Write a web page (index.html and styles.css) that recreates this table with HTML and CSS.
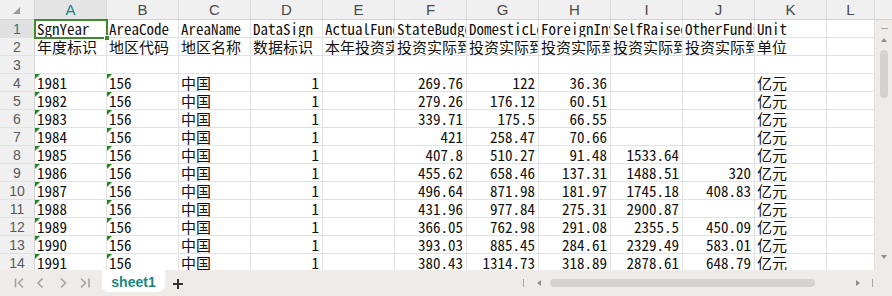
FILE: index.html
```html
<!DOCTYPE html>
<html lang="zh">
<head>
<meta charset="utf-8">
<title>sheet1</title>
<link rel="stylesheet" href="styles.css">
</head>
<body>
<div class="app">
  <div class="sheet">
    <div class="ch corner"><span class="corner-tri"></span></div>
    <div class="ch cur">A</div><div class="ch">B</div><div class="ch">C</div><div class="ch">D</div><div class="ch">E</div><div class="ch">F</div><div class="ch">G</div><div class="ch">H</div><div class="ch">I</div><div class="ch">J</div><div class="ch">K</div><div class="ch">L</div><div class="ch fill"></div>

    <div class="vs">
      <span class="vs-dash"></span>
      <span class="tri-up"></span>
      <span class="vs-thumb"></span>
      <span class="tri-down"></span>
    </div>

    <div class="rh cur">1</div><div class="c">SgnYear</div><div class="c">AreaCode</div><div class="c">AreaName</div><div class="c">DataSign</div><div class="c">ActualFunds</div><div class="c">StateBudget</div><div class="c">DomesticLoan</div><div class="c">ForeignInvest</div><div class="c">SelfRaisedFunds</div><div class="c">OtherFunds</div><div class="c">Unit</div><div class="c"></div>
    <div class="rh">2</div><div class="c">年度标识</div><div class="c">地区代码</div><div class="c">地区名称</div><div class="c">数据标识</div><div class="c">本年投资实际到位资金</div><div class="c">投资实际到位资金</div><div class="c">投资实际到位资金</div><div class="c">投资实际到位资金</div><div class="c">投资实际到位资金</div><div class="c">投资实际到位资金</div><div class="c">单位</div><div class="c"></div>
    <div class="rh">3</div><div class="c"></div><div class="c"></div><div class="c"></div><div class="c"></div><div class="c"></div><div class="c"></div><div class="c"></div><div class="c"></div><div class="c"></div><div class="c"></div><div class="c"></div><div class="c"></div>
    <div class="rh">4</div><div class="c t">1981</div><div class="c t">156</div><div class="c">中国</div><div class="c n">1</div><div class="c"></div><div class="c n">269.76</div><div class="c n">122</div><div class="c n">36.36</div><div class="c n"></div><div class="c n"></div><div class="c">亿元</div><div class="c"></div>
    <div class="rh">5</div><div class="c t">1982</div><div class="c t">156</div><div class="c">中国</div><div class="c n">1</div><div class="c"></div><div class="c n">279.26</div><div class="c n">176.12</div><div class="c n">60.51</div><div class="c n"></div><div class="c n"></div><div class="c">亿元</div><div class="c"></div>
    <div class="rh">6</div><div class="c t">1983</div><div class="c t">156</div><div class="c">中国</div><div class="c n">1</div><div class="c"></div><div class="c n">339.71</div><div class="c n">175.5</div><div class="c n">66.55</div><div class="c n"></div><div class="c n"></div><div class="c">亿元</div><div class="c"></div>
    <div class="rh">7</div><div class="c t">1984</div><div class="c t">156</div><div class="c">中国</div><div class="c n">1</div><div class="c"></div><div class="c n">421</div><div class="c n">258.47</div><div class="c n">70.66</div><div class="c n"></div><div class="c n"></div><div class="c">亿元</div><div class="c"></div>
    <div class="rh">8</div><div class="c t">1985</div><div class="c t">156</div><div class="c">中国</div><div class="c n">1</div><div class="c"></div><div class="c n">407.8</div><div class="c n">510.27</div><div class="c n">91.48</div><div class="c n">1533.64</div><div class="c n"></div><div class="c">亿元</div><div class="c"></div>
    <div class="rh">9</div><div class="c t">1986</div><div class="c t">156</div><div class="c">中国</div><div class="c n">1</div><div class="c"></div><div class="c n">455.62</div><div class="c n">658.46</div><div class="c n">137.31</div><div class="c n">1488.51</div><div class="c n">320</div><div class="c">亿元</div><div class="c"></div>
    <div class="rh">10</div><div class="c t">1987</div><div class="c t">156</div><div class="c">中国</div><div class="c n">1</div><div class="c"></div><div class="c n">496.64</div><div class="c n">871.98</div><div class="c n">181.97</div><div class="c n">1745.18</div><div class="c n">408.83</div><div class="c">亿元</div><div class="c"></div>
    <div class="rh">11</div><div class="c t">1988</div><div class="c t">156</div><div class="c">中国</div><div class="c n">1</div><div class="c"></div><div class="c n">431.96</div><div class="c n">977.84</div><div class="c n">275.31</div><div class="c n">2900.87</div><div class="c n"></div><div class="c">亿元</div><div class="c"></div>
    <div class="rh">12</div><div class="c t">1989</div><div class="c t">156</div><div class="c">中国</div><div class="c n">1</div><div class="c"></div><div class="c n">366.05</div><div class="c n">762.98</div><div class="c n">291.08</div><div class="c n">2355.5</div><div class="c n">450.09</div><div class="c">亿元</div><div class="c"></div>
    <div class="rh">13</div><div class="c t">1990</div><div class="c t">156</div><div class="c">中国</div><div class="c n">1</div><div class="c"></div><div class="c n">393.03</div><div class="c n">885.45</div><div class="c n">284.61</div><div class="c n">2329.49</div><div class="c n">583.01</div><div class="c">亿元</div><div class="c"></div>
    <div class="rh">14</div><div class="c t">1991</div><div class="c t">156</div><div class="c">中国</div><div class="c n">1</div><div class="c"></div><div class="c n">380.43</div><div class="c n">1314.73</div><div class="c n">318.89</div><div class="c n">2878.61</div><div class="c n">648.79</div><div class="c">亿元</div><div class="c"></div>

    <div class="selection"><span class="handle"></span></div>
  </div>

  <div class="bar">
    <svg class="nav" width="102" height="26" viewBox="0 0 102 26" aria-hidden="true">
      <g fill="none" stroke="#a3a3a3" stroke-width="1.6">
        <path d="M15.5 8.5v9"/>
        <path d="M23 8.5l-4.5 4.5 4.5 4.5"/>
        <path d="M42.5 8.5l-4.5 4.5 4.5 4.5"/>
        <path d="M61 8.5l4.5 4.5-4.5 4.5"/>
        <path d="M81 8.5l4.5 4.5-4.5 4.5"/>
        <path d="M89 8.5v9"/>
      </g>
    </svg>
    <div class="tab">sheet1</div>
    <svg class="plus" width="12" height="12" viewBox="0 0 12 12" aria-hidden="true">
      <path d="M6 1v10M1 6h10" stroke="#333" stroke-width="2"/>
    </svg>
    <div class="hs">
      <span class="hs-sep"></span>
      <span class="tri-left"></span>
      <span class="hs-thumb"></span>
      <span class="tri-right"></span>
      <span class="hs-sep last"></span>
    </div>
  </div>
</div>
</body>
</html>
```

FILE: styles.css
```css
* {
  box-sizing: border-box;
}

body {
  margin: 0;
  background: #ffffff;
}

.app {
  width: 892px;
  height: 296px;
  overflow: hidden;
  display: flex;
  flex-direction: column;
}

.sheet {
  position: relative;
  display: grid;
  grid-template-columns: 35px repeat(11, 72px) 48px 17px;
  grid-template-rows: 20px repeat(14, 18px);
  height: 270px;
  overflow: hidden;
  font-family: "Noto Sans Mono CJK SC", "Liberation Mono", "Noto Sans CJK SC", monospace;
  font-size: 15px;
  color: #111;
}

.ch {
  background: #f0f0f0;
  border-right: 1px solid #dcdcdc;
  border-bottom: 1px solid #d4d4d4;
  display: flex;
  align-items: center;
  justify-content: center;
  font-family: "Liberation Sans", "Noto Sans", sans-serif;
  font-size: 15px;
  color: #4a4a4a;
}

.ch.cur {
  background: #e4e4e4;
  color: #17847d;
}

.ch.fill {
  border-right: none;
}

.corner {
  position: relative;
}

.corner-tri {
  position: absolute;
  right: 14px;
  bottom: 5px;
  width: 0;
  height: 0;
  border-left: 7px solid transparent;
  border-bottom: 7px solid #9a9a9a;
}

.rh {
  background: #f0f0f0;
  border-right: 1px solid #d4d4d4;
  border-bottom: 1px solid #e2e2e2;
  display: flex;
  align-items: center;
  justify-content: center;
  font-family: "Liberation Sans", "Noto Sans", sans-serif;
  font-size: 14px;
  color: #5a5a5a;
}

.rh.cur {
  background: #e0e0e0;
  color: #17847d;
}

.c {
  position: relative;
  border-right: 1px solid #e2e2e2;
  border-bottom: 1px solid #e2e2e2;
  padding: 0 3px 0 2px;
  display: flex;
  align-items: flex-end;
  line-height: 16px;
  white-space: nowrap;
  overflow: hidden;
}

.n {
  justify-content: flex-end;
}

.t::before {
  content: "";
  position: absolute;
  left: 0;
  top: 0;
  width: 0;
  height: 0;
  border-top: 5px solid #1d8a1d;
  border-right: 5px solid transparent;
}

.vs {
  grid-column: 14;
  grid-row: 2 / 16;
  background: #efebe9;
  display: flex;
  flex-direction: column;
  align-items: center;
  padding-left: 1px;
}

.vs-dash {
  width: 7px;
  height: 1px;
  background: #a8a8a8;
  margin-top: 8px;
}

.tri-up {
  width: 0;
  height: 0;
  margin-top: 9px;
  border-left: 3px solid transparent;
  border-right: 3px solid transparent;
  border-bottom: 4px solid #8e8e8e;
}

.vs-thumb {
  width: 8px;
  height: 48px;
  margin-top: 8px;
  border-radius: 4px;
  background: #d6d2d0;
}

.tri-down {
  width: 0;
  height: 0;
  margin-top: auto;
  margin-bottom: 13px;
  border-left: 3px solid transparent;
  border-right: 3px solid transparent;
  border-top: 4px solid #8e8e8e;
}

.selection {
  position: absolute;
  left: 34px;
  top: 19px;
  width: 74px;
  height: 20px;
  border: 2px solid #3f8a2f;
  pointer-events: none;
}

.handle {
  position: absolute;
  right: -4px;
  bottom: -4px;
  width: 6px;
  height: 6px;
  background: #3f8a2f;
  border: 1px solid #ffffff;
}

.bar {
  height: 26px;
  background: #efebe9;
  display: flex;
  align-items: flex-start;
  font-family: "Liberation Sans", "Noto Sans", sans-serif;
}

.nav {
  display: block;
  flex: none;
}

.tab {
  width: 63px;
  height: 22px;
  background: #ffffff;
  border-radius: 0 0 7px 7px;
  display: flex;
  align-items: center;
  justify-content: center;
  padding-top: 1px;
  font-size: 14px;
  font-weight: bold;
  color: #1b8680;
}

.plus {
  margin: 8px 0 0 7px;
  flex: none;
}

.hs {
  margin-left: auto;
  margin-right: 19px;
  height: 26px;
  display: flex;
  align-items: center;
}

.hs-sep {
  width: 1px;
  height: 8px;
  background: #a8a8a8;
}

.tri-left {
  width: 0;
  height: 0;
  margin-left: 13px;
  border-top: 3px solid transparent;
  border-bottom: 3px solid transparent;
  border-right: 4px solid #8e8e8e;
}

.hs-thumb {
  width: 265px;
  height: 8px;
  margin-left: 9px;
  border-radius: 4px;
  background: #d6d2d0;
}

.tri-right {
  width: 0;
  height: 0;
  margin-left: 41px;
  border-top: 3px solid transparent;
  border-bottom: 3px solid transparent;
  border-left: 4px solid #8e8e8e;
}

.hs-sep.last {
  margin-left: 12px;
}
```
